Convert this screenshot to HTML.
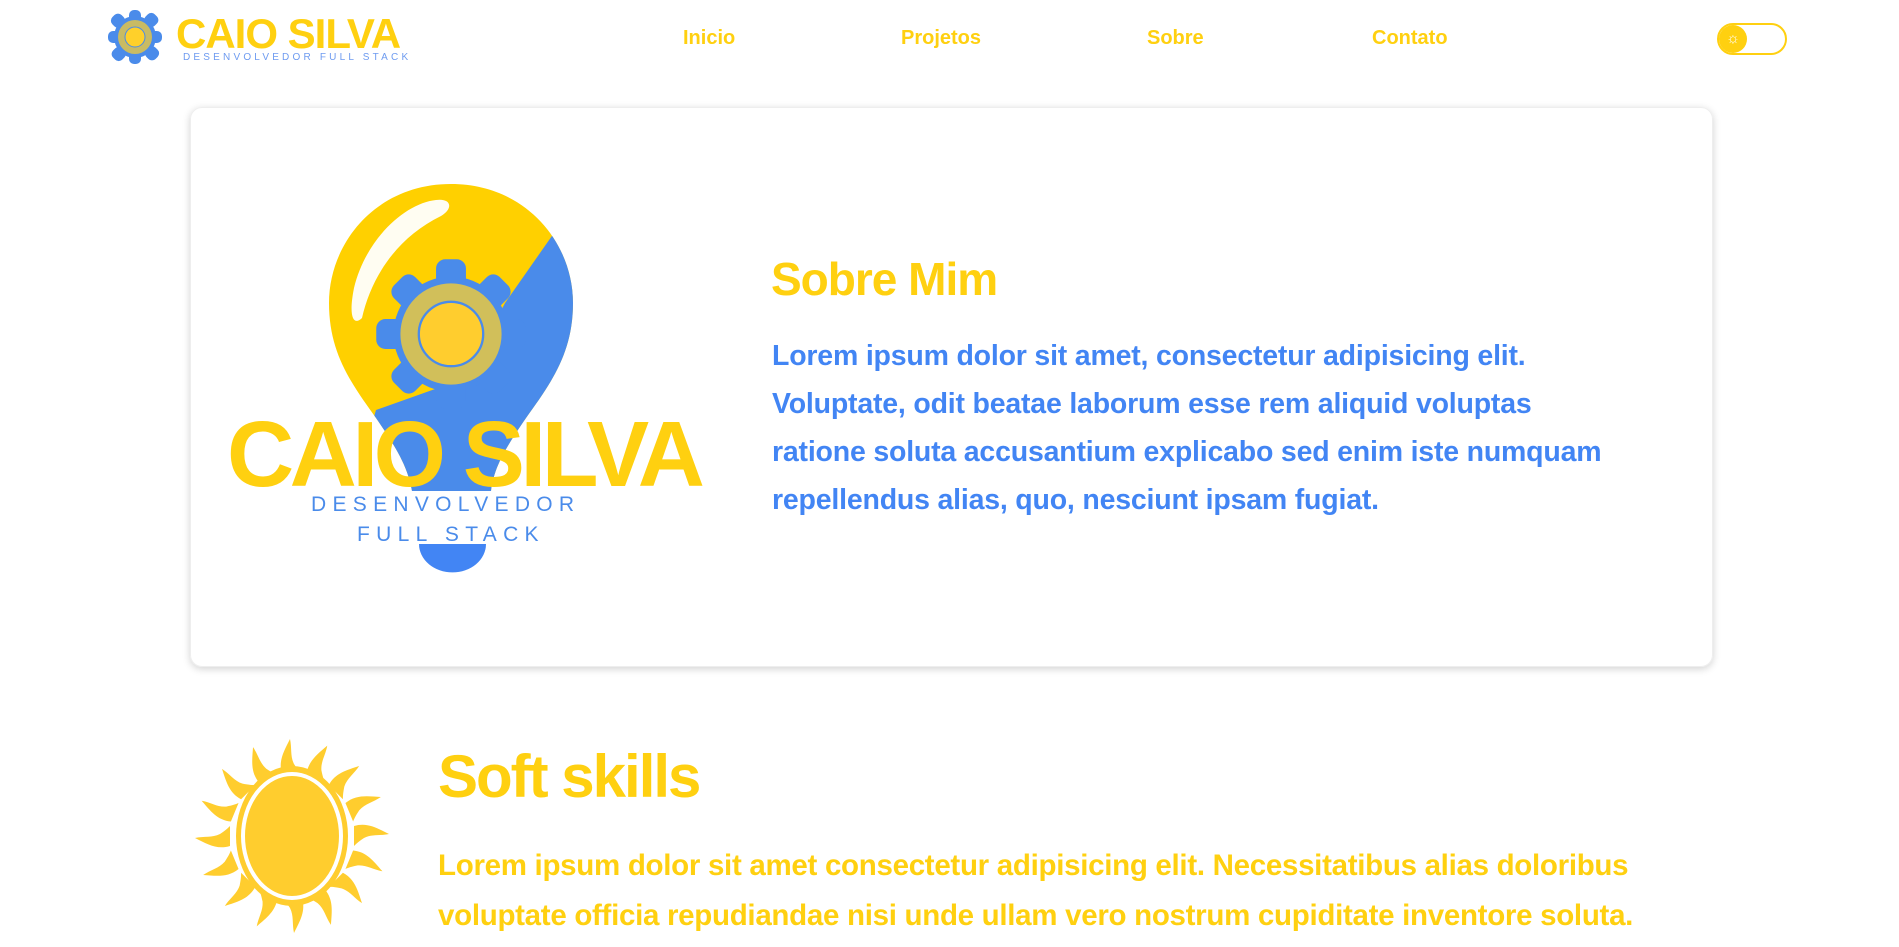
<!DOCTYPE html>
<html><head><meta charset="utf-8">
<style>
*{margin:0;padding:0;box-sizing:border-box}
body{width:1899px;height:947px;overflow:hidden;background:#fff;font-family:"Liberation Sans",sans-serif;position:relative}
.y{color:#FFD010}.b{color:#4285F4}
.abs{position:absolute}
.nav{font-size:20px;font-weight:bold;color:#FFD010;top:27px}
.card{left:190px;top:107px;width:1523px;height:560px;border-radius:12px;box-shadow:0 2px 8px rgba(0,0,0,.18);border:1px solid #eee}
.p1{left:772px;top:332px;font-size:28.5px;font-weight:bold;line-height:48px;color:#4285F4;white-space:nowrap;letter-spacing:-0.2px}
.p2{left:438px;top:841px;font-size:29.5px;font-weight:bold;line-height:50px;color:#FFD010;white-space:nowrap;letter-spacing:-0.3px}
</style></head><body>
<svg class="abs" style="left:106px;top:8px" width="58" height="58" viewBox="0 0 58 58">
<g fill="#4A8BEA"><circle cx="29" cy="29" r="21"/>
<rect x="23" y="2" width="12" height="14" rx="5"/><rect x="23" y="42" width="12" height="14" rx="5"/>
<rect x="2" y="23" width="14" height="12" rx="5"/><rect x="42" y="23" width="14" height="12" rx="5"/>
<rect x="6" y="6" width="13" height="13" rx="5" transform="rotate(45 12 12)"/><rect x="39" y="39" width="13" height="13" rx="5" transform="rotate(45 46 46)"/>
<rect x="39" y="6" width="13" height="13" rx="5" transform="rotate(45 46 12)"/><rect x="6" y="39" width="13" height="13" rx="5" transform="rotate(45 12 46)"/></g>
<circle cx="29" cy="29" r="17" fill="#FFD02A" opacity=".7"/><circle cx="29" cy="29" r="10" fill="#FFD02A" stroke="#4A8BEA"/>
</svg>
<div class="abs y" style="left:176px;top:10px;font-size:42px;font-weight:bold;letter-spacing:-1px;line-height:48px">CAIO SILVA</div>
<div class="abs b" style="left:183px;top:52px;font-size:10px;letter-spacing:3.2px;color:#6E9BF0">DESENVOLVEDOR FULL STACK</div>
<div class="abs nav" style="left:683px">Inicio</div>
<div class="abs nav" style="left:901px">Projetos</div>
<div class="abs nav" style="left:1147px">Sobre</div>
<div class="abs nav" style="left:1372px">Contato</div>
<div class="abs" style="left:1717px;top:23px;width:70px;height:32px;border:2px solid #FFD010;border-radius:16px"></div>
<div class="abs" style="left:1719px;top:25px;width:28px;height:28px;border-radius:50%;background:#FFD010;color:#fff;font-size:15px;text-align:center;line-height:28px">☼</div>

<div class="abs card"></div>
<svg class="abs" style="left:226px;top:178px" width="480" height="400" viewBox="0 0 480 400">
<defs><clipPath id="bc"><path d="M225 6 C150 6 103 65 103 125 C103 175 125 205 150 240 C172 272 182 290 186 313 L265 313 C268 290 278 272 300 240 C325 205 347 175 347 125 C347 65 300 6 225 6Z"/></clipPath></defs>
<g clip-path="url(#bc)"><rect x="0" y="0" width="400" height="400" fill="#FFD000"/>
<path d="M335 45 L279 125 L240 200 L150 232 L100 400 L400 400Z" fill="#4A8BEA"/></g>
<path d="M210 22 C180 25 140 60 128 110 C122 140 128 148 136 140 C145 100 170 60 215 38 C228 30 225 20 210 22Z" fill="#fff" opacity=".95"/>
<g transform="translate(225 156) scale(1.15)">
<g fill="#4A8BEA"><circle r="50"/>
<rect x="-13" y="-65" width="26" height="30" rx="8"/><rect x="-13" y="35" width="26" height="30" rx="8"/>
<rect x="-65" y="-13" width="30" height="26" rx="8"/><rect x="35" y="-13" width="30" height="26" rx="8"/>
<g transform="rotate(45)"><rect x="-13" y="-65" width="26" height="30" rx="8"/><rect x="-13" y="35" width="26" height="30" rx="8"/><rect x="-65" y="-13" width="30" height="26" rx="8"/><rect x="35" y="-13" width="30" height="26" rx="8"/></g></g>
<circle r="44" fill="#FFD02A" opacity=".75"/><circle r="28" fill="#FFCD2E" stroke="#4A8BEA" stroke-width="2"/></g>
<path d="M193 366 A33 28 0 0 0 260 366Z" fill="#4285F4"/>
</svg>
<div class="abs y" style="left:227px;top:404px;font-size:93px;font-weight:bold;letter-spacing:-4.5px;line-height:100px">CAIO SILVA</div>
<div class="abs" style="left:311px;top:493px;font-size:21px;letter-spacing:6.3px;color:#4A8BEA">DESENVOLVEDOR</div>
<div class="abs" style="left:357px;top:523px;font-size:21px;letter-spacing:6.3px;color:#4A8BEA">FULL STACK</div>

<div class="abs y" style="left:771px;top:252px;font-size:46px;font-weight:bold;letter-spacing:-1px">Sobre Mim</div>
<div class="abs p1">Lorem ipsum dolor sit amet, consectetur adipisicing elit.<br>Voluptate, odit beatae laborum esse rem aliquid voluptas<br>ratione soluta accusantium explicabo sed enim iste numquam<br>repellendus alias, quo, nesciunt ipsam fugiat.</div>

<svg class="abs" style="left:192px;top:736px" width="200" height="200" viewBox="-100 -100 200 200">
<g fill="#FFCD2E">
<g id="r"><path d="M-10 -62 C-14 -75 -8 -85 -2 -97 C0 -88 -2 -80 2 -72 C6 -66 8 -64 10 -62Z"/></g>
<use href="#r" transform="rotate(22.5)"/><use href="#r" transform="rotate(45)"/><use href="#r" transform="rotate(67.5)"/>
<use href="#r" transform="rotate(90)"/><use href="#r" transform="rotate(112.5)"/><use href="#r" transform="rotate(135)"/>
<use href="#r" transform="rotate(157.5)"/><use href="#r" transform="rotate(180)"/><use href="#r" transform="rotate(202.5)"/>
<use href="#r" transform="rotate(225)"/><use href="#r" transform="rotate(247.5)"/><use href="#r" transform="rotate(270)"/>
<use href="#r" transform="rotate(292.5)"/><use href="#r" transform="rotate(315)"/><use href="#r" transform="rotate(337.5)"/>
<ellipse rx="56" ry="70"/></g>
<ellipse rx="49" ry="62" fill="#FFCD2E" stroke="#fff" stroke-width="4"/>
</svg>
<div class="abs y" style="left:438px;top:742px;font-size:60px;font-weight:bold;letter-spacing:-2px">Soft skills</div>
<div class="abs p2">Lorem ipsum dolor sit amet consectetur adipisicing elit. Necessitatibus alias doloribus<br>voluptate officia repudiandae nisi unde ullam vero nostrum cupiditate inventore soluta.</div>
</body></html>
